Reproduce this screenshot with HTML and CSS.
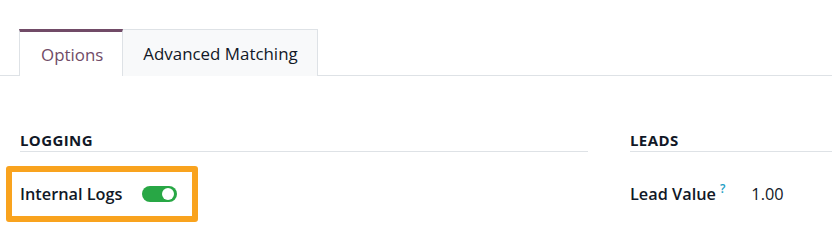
FILE: index.html
```html
<!DOCTYPE html>
<html>
<head>
<meta charset="utf-8">
<link rel="stylesheet" href="styles.css">
</head>
<body>
<div class="page">
  <div class="tabs">
    <div class="tab active">Options</div>
    <div class="tab">Advanced Matching</div>
  </div>
  <div class="groups">
    <div class="group">
      <div class="group-title">LOGGING</div>
      <div class="field highlight">
        <span class="label">Internal Logs</span>
        <span class="switch"><span class="knob"></span></span>
      </div>
    </div>
    <div class="group right">
      <div class="group-title">LEADS</div>
      <div class="field plain">
        <span class="label">Lead Value<sup class="help">?</sup></span>
        <span class="value">1.00</span>
      </div>
    </div>
  </div>
</div>
</body>
</html>
```

FILE: styles.css
```css
html, body {
  margin: 0;
  padding: 0;
  background: #ffffff;
}
body {
  font-family: "Open Sans", "Noto Sans", sans-serif;
  color: #111827;
  overflow: hidden;
}
.page {
  padding-top: 29px;
}
.tabs {
  display: flex;
  padding-left: 19px;
  border-bottom: 1px solid #dee2e6;
  height: 46px;
}
.tab {
  box-sizing: border-box;
  height: 47px;
  padding: 0 19px 0 20px;
  display: flex;
  align-items: center;
  font-size: 16.9px;
  color: #111827;
  background: #f8f9fa;
  border: 1px solid #dee2e6;
  border-left: none;
  border-bottom: none;
}
.tab.active {
  background: #ffffff;
  border-left: 1px solid #dee2e6;
  border-top: 3px solid #714b67;
  color: #714b67;
  padding: 0 19px 0 21px;
  height: 47px;
}
.groups {
  display: grid;
  grid-template-columns: 568px 1fr;
  column-gap: 42px;
  padding-left: 20px;
  padding-top: 55px;
}
.group-title {
  font-size: 15px;
  font-weight: 700;
  letter-spacing: 0.4px;
  line-height: 19px;
  padding-bottom: 1px;
  border-bottom: 1px solid #dee2e6;
}
.right .group-title {
  margin-right: -30px;
}
.field {
  display: flex;
  align-items: center;
  height: 44px;
  margin-top: 14px;
  font-size: 16.3px;
  border: 6px solid transparent;
}
.field.plain {
  border-left: none;
  border-right: none;
}
.highlight {
  margin-left: -14px;
  width: 172px;
  padding-left: 8px;
  border-color: #f9a31e;
  border-radius: 3px;
  box-sizing: content-box;
}
.label {
  font-weight: 600;
  color: #111827;
}
.switch {
  position: relative;
  display: inline-block;
  width: 35px;
  height: 16px;
  border-radius: 8px;
  background: #28a745;
  margin-left: 20px;
}
.knob {
  position: absolute;
  right: 3px;
  top: 2px;
  width: 12px;
  height: 12px;
  border-radius: 50%;
  background: #ffffff;
}
.help {
  color: #1c9ec4;
  font-size: 12px;
  font-weight: 600;
  margin-left: 4px;
  vertical-align: 7px;
  line-height: 0;
}
.value {
  margin-left: 26px;
  color: #111827;
}
```
